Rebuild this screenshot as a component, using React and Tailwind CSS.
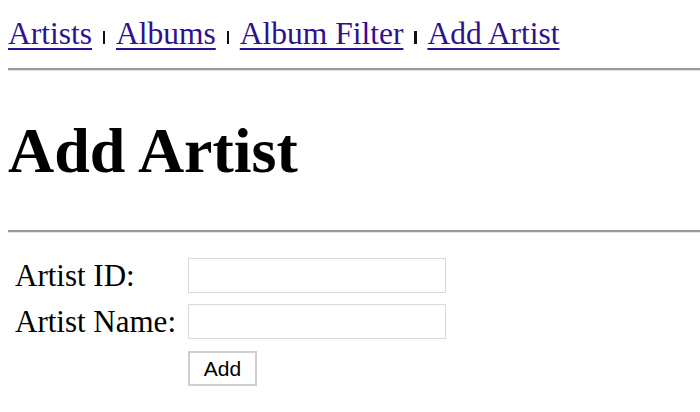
export default function App() {
  const link = "text-[#2e1190] underline decoration-2 underline-offset-[4px]";
  const sep = (
    <span className="inline-block w-[24px] text-center">
      <span className="inline-block h-[13px] w-[2.5px] bg-[#111] align-baseline" />
    </span>
  );
  return (
    <div className="min-h-[412px] bg-white pl-2 font-['Liberation_Serif',serif] text-black">
      <nav className="pt-4 text-[31.5px] leading-[36px] whitespace-nowrap">
        <a href="#" className={link}>Artists</a>
        {sep}
        <a href="#" className={link}>Albums</a>
        {sep}
        <a href="#" className={link}>Album Filter</a>
        {sep}
        <a href="#" className={link}>Add Artist</a>
      </nav>
      <hr className="mt-4 h-[3px] border-0 border-t-2 border-b border-t-[#9a9a9a] border-b-[#e4e4e4]" />
      <h1 className="mt-[44px] text-[64px] font-bold leading-[72px]">Add Artist</h1>
      <hr className="mt-[43px] h-[3px] border-0 border-t-2 border-b border-t-[#9a9a9a] border-b-[#e4e4e4]" />
      <form className="mt-[25px] grid grid-cols-[180px_258px] items-center gap-y-[11px] text-[31px] leading-[35px]">
        <label className="pl-[7px]">Artist ID:</label>
        <input className="h-[35px] w-[258px] border border-[#d9d9d9] bg-white outline-none" />
        <label className="pl-[7px]">Artist Name:</label>
        <input className="h-[35px] w-[258px] border border-[#d9d9d9] bg-white outline-none" />
        <div />
        <button
          type="button"
          className="mt-[1px] flex h-[35px] w-[69px] items-center justify-center border-2 border-[#cfcfcf] bg-white font-['Liberation_Sans',sans-serif] text-[21px] leading-none text-black"
        >
          Add
        </button>
      </form>
    </div>
  );
}
